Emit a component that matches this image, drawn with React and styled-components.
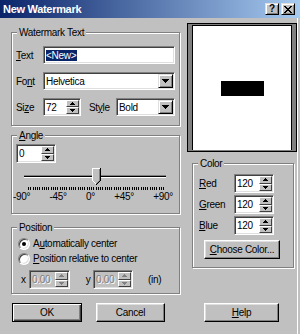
import styled, { createGlobalStyle, css } from 'styled-components'

const GlobalStyle = createGlobalStyle`
  html, body {
    margin: 0;
    padding: 0;
    background: #c0c0c0;
  }
  body {
    font-family: "Liberation Sans", Arial, sans-serif;
    font-size: 10px;
    letter-spacing: -0.3px;
    color: #000;
  }
`;

const raised = css`
  background: #c0c0c0;
  border: 1px solid;
  border-color: #dfdfdf #000 #000 #dfdfdf;
  box-shadow: inset 1px 1px #fff, inset -1px -1px #808080;
`;

const Window = styled.div`
  width: 300px;
  height: 334px;
  box-sizing: border-box;
  background: #c0c0c0;
  display: flex;
  flex-direction: column;
  overflow: hidden;
  box-shadow: inset -2px 0 #c0c0c0, inset -3px 0 #fff;
`;

const TitleBar = styled.div`
  height: 18px;
  flex-shrink: 0;
  display: flex;
  align-items: center;
  padding: 0 5px 0 3px;
  background: linear-gradient(to right, #0a246a, #a6caf0);
`;

const Title = styled.span`
  flex: 1;
  color: #fff;
  font-weight: bold;
  font-size: 11px;
  letter-spacing: -0.3px;
`;

const CaptionButton = styled.div`
  box-sizing: border-box;
  width: 14px;
  height: 12px;
  ${raised};
  display: flex;
  align-items: center;
  justify-content: center;
  font-weight: bold;
  font-size: 10px;
  line-height: 10px;
  letter-spacing: 0;
  & + & {
    margin-left: 2px;
  }
`;

const Main = styled.div`
  display: flex;
  align-items: flex-start;
  padding-left: 11px;
`;

const LeftColumn = styled.div`
  width: 169px;
  margin-top: 14px;
  display: flex;
  flex-direction: column;
`;

const RightColumn = styled.div`
  width: 110px;
  margin-left: 7px;
  margin-top: 5px;
  display: flex;
  flex-direction: column;
`;

const Group = styled.div`
  position: relative;
  box-sizing: border-box;
  width: ${p => (p.$w ? `${p.$w}px` : 'auto')};
  height: ${p => p.$h}px;
  margin-top: ${p => p.$mt || 0}px;
  margin-left: ${p => p.$ml || 0}px;
  padding: ${p => p.$pad};
  border: 1px solid #808080;
  box-shadow: inset 1px 1px #fff, 1px 1px #fff;
`;

const Legend = styled.span`
  position: absolute;
  top: -7px;
  left: 5px;
  padding: 0 2px;
  line-height: 13px;
  background: #c0c0c0;
  white-space: nowrap;
`;

const U = styled.span`
  text-decoration: underline;
`;

const FormRow = styled.div`
  display: flex;
  align-items: center;
  height: ${p => p.$h || 18}px;
  margin-top: ${p => p.$mt || 0}px;
`;

const Label = styled.span`
  flex-shrink: 0;
  width: ${p => p.$w || 27}px;
  margin-left: ${p => p.$ml || 0}px;
  line-height: 13px;
  white-space: nowrap;
`;

const Field = styled.div`
  box-sizing: border-box;
  flex-shrink: 0;
  width: ${p => p.$w}px;
  height: ${p => p.$h || 18}px;
  margin-left: ${p => p.$ml || 0}px;
  padding: 1px;
  display: flex;
  align-items: center;
  background: ${p => (p.$disabled ? '#c0c0c0' : '#fff')};
  border: 1px solid;
  border-color: #808080 #fff #fff #808080;
  box-shadow: inset 1px 1px #404040, inset -1px -1px #dfdfdf;
`;

const Value = styled.span`
  flex: 1;
  padding-left: 1px;
  line-height: 13px;
  white-space: nowrap;
  overflow: hidden;
  color: ${p => (p.$disabled ? '#808080' : '#000')};
  text-shadow: ${p => (p.$disabled ? '1px 1px #fff' : 'none')};
`;

const Selected = styled.span`
  background: #0a246a;
  color: #fff;
  padding: 0 1px 0 0;
`;

const DropButton = styled.div`
  box-sizing: border-box;
  width: 15px;
  height: 100%;
  flex-shrink: 0;
  ${raised};
  display: flex;
  align-items: center;
  justify-content: center;
`;

const SpinBox = styled.div`
  width: 13px;
  height: 100%;
  flex-shrink: 0;
  display: flex;
  flex-direction: column;
`;

const SpinHalf = styled.div`
  flex: 1;
  box-sizing: border-box;
  background: #c0c0c0;
  border: 1px solid;
  border-color: #fff #404040 #404040 #fff;
  display: flex;
  align-items: center;
  justify-content: center;
`;

const Slider = styled.div`
  position: relative;
  box-sizing: border-box;
  height: 24px;
  padding-top: 12px;
`;

const Track = styled.div`
  height: 1px;
  margin: 0 13px 0 12px;
  background: #000;
  border-top: 1px solid #808080;
  border-bottom: 1px solid #fff;
`;

const ThumbWrap = styled.div`
  position: absolute;
  top: 5px;
  left: 80px;
  line-height: 0;
`;

const TickRow = styled.div`
  height: 4px;
  padding-left: 16px;
  line-height: 0;
`;

const TickLabels = styled.div`
  display: flex;
  justify-content: space-between;
  height: 12px;
  line-height: 12px;
  padding: 0 6px 0 1px;
`;

const RadioRow = styled.div`
  display: flex;
  align-items: center;
  gap: 3px;
  height: 13px;
  margin-top: ${p => p.$mt || 0}px;
  line-height: 13px;
  white-space: nowrap;
`;

const Radio = styled.div`
  position: relative;
  box-sizing: border-box;
  width: 12px;
  height: 12px;
  flex-shrink: 0;
  border-radius: 50%;
  background: #fff;
  border: 1px solid;
  border-color: #808080 #fff #fff #808080;
  box-shadow: inset 1px 1px #404040, inset -1px -1px #dfdfdf;
  ${p => p.$checked && css`
    &::after {
      content: '';
      position: absolute;
      left: 3px;
      top: 3px;
      width: 4px;
      height: 4px;
      border-radius: 50%;
      background: #000;
    }
  `}
`;

const CoordRow = styled.div`
  display: flex;
  align-items: center;
  height: 19px;
  margin-top: 5px;
  margin-left: 3px;
`;

const CoordLabel = styled.span`
  width: ${p => p.$w}px;
  margin-left: ${p => p.$ml || 0}px;
  text-align: ${p => p.$align || 'left'};
  line-height: 13px;
  flex-shrink: 0;
  white-space: nowrap;
`;

const Preview = styled.div`
  box-sizing: border-box;
  width: 110px;
  height: 129px;
  padding: 1px 4px;
  background: #808080;
  border: 1px solid #000;
`;

const Page = styled.div`
  box-sizing: border-box;
  height: 100%;
  background: #fff;
  border: 1px solid #000;
  border-bottom: none;
  display: flex;
  align-items: center;
  justify-content: center;
`;

const Mark = styled.div`
  width: 43px;
  height: 15px;
  background: #000;
`;

const PushButton = styled.div`
  box-sizing: border-box;
  width: ${p => p.$w}px;
  height: 19px;
  margin-left: ${p => p.$ml || 0}px;
  margin-top: ${p => p.$mt || 0}px;
  flex-shrink: 0;
  display: flex;
  align-items: center;
  justify-content: center;
  line-height: 13px;
  white-space: nowrap;
  background: #c0c0c0;
  border: 1px solid;
  border-color: #fff #000 #000 #fff;
  box-shadow: inset -1px -1px #808080, inset 1px 1px #dfdfdf;
  ${p => p.$default && css`
    border-color: #000;
    box-shadow: inset 1px 1px #fff, inset -1px -1px #404040, inset -2px -2px #808080;
  `}
`;

const ButtonRow = styled.div`
  display: flex;
  margin-top: 9px;
  padding-left: 12px;
`;

const closePath = Array.from({ length: 7 }, (_, i) => `M${i} ${i}h2v1h-2z M${6 - i} ${i}h2v1h-2z`).join(' ');

const CloseIcon = () => (
  <svg width="8" height="7" viewBox="0 0 8 7" shapeRendering="crispEdges">
    <path d={closePath} fill="#000" />
  </svg>
);

const DownArrow = () => (
  <svg width="7" height="4" viewBox="0 0 7 4" shapeRendering="crispEdges">
    <path d="M0 0h7v1H0z M1 1h5v1H1z M2 2h3v1H2z M3 3h1v1H3z" fill="#000" />
  </svg>
);

const SpinArrow = ({ up, disabled }) => (
  <svg width="5" height="3" viewBox="0 0 5 3" shapeRendering="crispEdges">
    <path
      d={up ? 'M2 0h1v1H2z M1 1h3v1H1z M0 2h5v1H0z' : 'M0 0h5v1H0z M1 1h3v1H1z M2 2h1v1H2z'}
      fill={disabled ? '#808080' : '#000'}
    />
  </svg>
);

const Spinner = ({ disabled }) => (
  <SpinBox>
    <SpinHalf><SpinArrow up disabled={disabled} /></SpinHalf>
    <SpinHalf><SpinArrow disabled={disabled} /></SpinHalf>
  </SpinBox>
);

const Thumb = () => (
  <svg width="9" height="17" viewBox="0 0 9 17" shapeRendering="crispEdges">
    <path d="M0 0H9V13H8V14H7V15H6V16H5V17H4V16H3V15H2V14H1V13H0Z" fill="#c0c0c0" />
    <path d="M0 0h1v13H0z M1 0h7v1H1z M1 13h1v1H1z M2 14h1v1H2z M3 15h1v1H3z" fill="#fff" />
    <path d="M7 1h1v12H7z M6 13h1v1H6z M5 14h1v1H5z M4 15h1v1H4z" fill="#808080" />
    <path d="M8 0h1v13H8z M7 13h1v1H7z M6 14h1v1H6z M5 15h1v1H5z M4 16h1v1H4z" fill="#000" />
  </svg>
);

const ticks = Array.from({ length: 61 }, (_, i) => Math.round((i * 135) / 60));

const Ticks = () => (
  <svg width="136" height="3" viewBox="0 0 136 3" shapeRendering="crispEdges">
    {ticks.map(x => <rect key={x} x={x} y={0} width={1} height={3} fill="#000" />)}
  </svg>
);

const colorRows = [
  { key: 'R', rest: 'ed' },
  { key: 'G', rest: 'reen' },
  { key: 'B', rest: 'lue' },
];

const App = () => (
  <>
    <GlobalStyle />
    <Window>
      <TitleBar>
        <Title>New Watermark</Title>
        <CaptionButton>?</CaptionButton>
        <CaptionButton><CloseIcon /></CaptionButton>
      </TitleBar>

      <Main>
        <LeftColumn>
          <Group $h={94} $pad="13px 4px 9px">
            <Legend>Watermark Text</Legend>
            <FormRow>
              <Label><U>T</U>ext</Label>
              <Field $w={132}><Value><Selected>&lt;New&gt;</Selected></Value></Field>
            </FormRow>
            <FormRow $mt={8}>
              <Label>Fo<U>n</U>t</Label>
              <Field $w={132}><Value>Helvetica</Value><DropButton><DownArrow /></DropButton></Field>
            </FormRow>
            <FormRow $mt={8}>
              <Label>Si<U>z</U>e</Label>
              <Field $w={38}><Value>72</Value><Spinner /></Field>
              <Label $ml={8}>St<U>y</U>le</Label>
              <Field $w={59}><Value>Bold</Value><DropButton><DownArrow /></DropButton></Field>
            </FormRow>
          </Group>

          <Group $h={79} $mt={9} $pad="8px 0 10px">
            <Legend><U>A</U>ngle</Legend>
            <Field $w={40} $h={19} $ml={4}><Value>0</Value><Spinner /></Field>
            <Slider>
              <Track />
              <ThumbWrap><Thumb /></ThumbWrap>
            </Slider>
            <TickRow><Ticks /></TickRow>
            <TickLabels>
              <span>-90°</span>
              <span>-45°</span>
              <span>0°</span>
              <span>+45°</span>
              <span>+90°</span>
            </TickLabels>
          </Group>

          <Group $h={67} $mt={13} $pad="9px 0 4px 6px">
            <Legend>Position</Legend>
            <RadioRow>
              <Radio $checked />
              <span>A<U>u</U>tomatically center</span>
            </RadioRow>
            <RadioRow $mt={2}>
              <Radio />
              <span><U>P</U>osition relative to center</span>
            </RadioRow>
            <CoordRow>
              <CoordLabel $w={8}>x</CoordLabel>
              <Field $w={41} $h={19} $disabled><Value $disabled>0.00</Value><Spinner disabled /></Field>
              <CoordLabel $w={23} $align="right">y&nbsp;</CoordLabel>
              <Field $w={40} $h={19} $disabled><Value $disabled>0.00</Value><Spinner disabled /></Field>
              <CoordLabel $w={20} $ml={15}>(in)</CoordLabel>
            </CoordRow>
          </Group>
        </LeftColumn>

        <RightColumn>
          <Preview>
            <Page><Mark /></Page>
          </Preview>
          <Group $w={102} $h={105} $mt={11} $ml={5} $pad="10px 0 9px 6px">
            <Legend>Color</Legend>
            {colorRows.map((c, i) => (
              <FormRow key={c.key} $h={19} $mt={i ? 2 : 0}>
                <Label $w={35}><U>{c.key}</U>{c.rest}</Label>
                <Field $w={40} $h={19}><Value>120</Value><Spinner /></Field>
              </FormRow>
            ))}
            <PushButton $w={76} $ml={5} $mt={5}><span><U>C</U>hoose Color...</span></PushButton>
          </Group>
        </RightColumn>
      </Main>

      <ButtonRow>
        <PushButton $w={70} $default>OK</PushButton>
        <PushButton $w={69} $ml={14}>Cancel</PushButton>
        <PushButton $w={75} $ml={39}><span><U>H</U>elp</span></PushButton>
      </ButtonRow>
    </Window>
  </>
);

export default App;
